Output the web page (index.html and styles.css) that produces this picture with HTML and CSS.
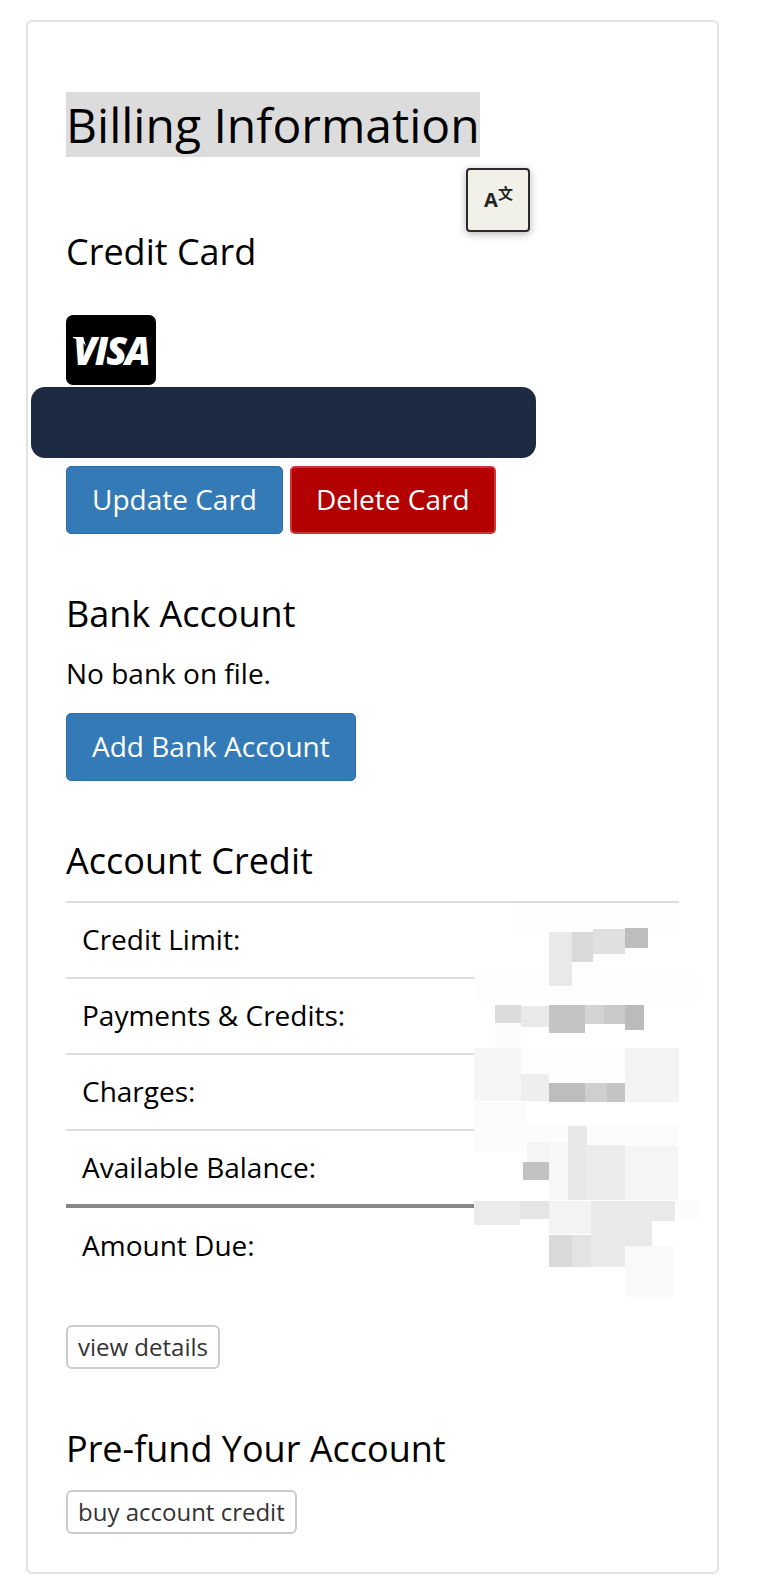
FILE: index.html
```html
<!DOCTYPE html>
<html lang="en">
<head>
<meta charset="utf-8">
<title>Billing Information</title>
<link rel="stylesheet" href="styles.css">
</head>
<body>
<main class="panel">
  <h1 class="title"><span class="selected">Billing Information</span></h1>
  <button class="translate" type="button" aria-label="Translate"><span class="tr-a">A</span><span class="tr-zh">文</span></button>

  <section class="credit-card">
    <h2 class="section-title">Credit Card</h2>
    <div class="visa"><svg class="visa-wedge" width="14" height="10" viewBox="0 0 14 10" aria-hidden="true"><path d="M0 0H10L13 9C10 5 5 2 0 1Z" fill="#fff"/></svg><span class="visa-text">VISA</span></div>
    <div class="redacted"></div>
    <div class="actions">
      <a class="btn btn-blue">Update Card</a>
      <a class="btn btn-red">Delete Card</a>
    </div>
  </section>

  <section class="bank">
    <h2 class="section-title">Bank Account</h2>
    <p class="note">No bank on file.</p>
    <a class="btn btn-blue">Add Bank Account</a>
  </section>

  <section class="account-credit">
    <h2 class="section-title">Account Credit</h2>
    <div class="table-wrap">
      <table class="ledger">
        <tr><td>Credit Limit:</td><td></td></tr>
        <tr><td>Payments &amp; Credits:</td><td></td></tr>
        <tr><td>Charges:</td><td></td></tr>
        <tr><td>Available Balance:</td><td></td></tr>
        <tr class="total"><td>Amount Due:</td><td></td></tr>
      </table>
      <svg class="pixels" width="226" height="402" viewBox="474 902 226 402" aria-hidden="true">
        <rect x="475" y="904" width="225" height="400" fill="#fff"/>
        <rect x="515" y="904" width="160" height="30" fill="#fefefe"/>
        <rect x="475" y="973" width="222" height="29" fill="#fdfdfd"/>
        <rect x="549" y="933" width="23" height="54" fill="#e9e9e9"/>
        <rect x="572" y="933" width="21" height="30" fill="#d9d9d9"/>
        <rect x="593" y="930" width="32" height="25" fill="#e0e0e0"/>
        <rect x="625" y="929" width="23" height="20" fill="#bdbdbd"/>
        <rect x="495" y="1024" width="26" height="25" fill="#fcfcfc"/>
        <rect x="495" y="1006" width="26" height="18" fill="#dcdcdc"/>
        <rect x="521" y="1007" width="28" height="21" fill="#e9e9e9"/>
        <rect x="549" y="1006" width="36" height="28" fill="#c4c4c4"/>
        <rect x="585" y="1006" width="19" height="19" fill="#d3d3d3"/>
        <rect x="604" y="1006" width="21" height="19" fill="#c9c9c9"/>
        <rect x="625" y="1006" width="19" height="25" fill="#bbbbbb"/>
        <rect x="474" y="1049" width="47" height="53" fill="#f6f6f6"/>
        <rect x="521" y="1049" width="104" height="26" fill="#fdfdfd"/>
        <rect x="521" y="1075" width="28" height="27" fill="#eeeeee"/>
        <rect x="549" y="1084" width="36" height="19" fill="#bdbdbd"/>
        <rect x="585" y="1084" width="22" height="19" fill="#cfcfcf"/>
        <rect x="607" y="1084" width="18" height="19" fill="#c4c4c4"/>
        <rect x="625" y="1049" width="54" height="54" fill="#f3f3f3"/>
        <rect x="474" y="1103" width="52" height="50" fill="#fcfcfc"/>
        <rect x="527" y="1124" width="151" height="23" fill="#fcfcfc"/>
        <rect x="527" y="1143" width="22" height="20" fill="#f5f5f5"/>
        <rect x="523" y="1163" width="26" height="18" fill="#c2c2c2"/>
        <rect x="549" y="1143" width="19" height="58" fill="#f7f7f7"/>
        <rect x="568" y="1127" width="19" height="74" fill="#e8e8e8"/>
        <rect x="587" y="1146" width="38" height="55" fill="#ebebeb"/>
        <rect x="625" y="1147" width="53" height="54" fill="#f5f5f5"/>
        <rect x="474" y="1202" width="46" height="24" fill="#ebebeb"/>
        <rect x="520" y="1202" width="29" height="18" fill="#e5e5e5"/>
        <rect x="549" y="1202" width="42" height="33" fill="#f3f3f3"/>
        <rect x="591" y="1202" width="61" height="45" fill="#e9e9e9"/>
        <rect x="652" y="1202" width="23" height="20" fill="#e9e9e9"/>
        <rect x="677" y="1202" width="21" height="20" fill="#fcfcfc"/>
        <rect x="549" y="1236" width="23" height="32" fill="#d9d9d9"/>
        <rect x="572" y="1236" width="19" height="32" fill="#e3e3e3"/>
        <rect x="591" y="1247" width="34" height="21" fill="#eaeaea"/>
        <rect x="625" y="1247" width="48" height="51" fill="#f9f9f9"/>
      </svg>
    </div>
    <a class="btn-small details">view details</a>
  </section>

  <section class="prefund">
    <h2 class="section-title">Pre-fund Your Account</h2>
    <a class="btn-small">buy account credit</a>
  </section>
</main>
</body>
</html>
```

FILE: styles.css
```css
* { box-sizing: border-box; }
html, body { margin: 0; background: #fff; }
body {
  padding: 20px 39px 22px 26px;
  font-family: "Open Sans", "Noto Sans", sans-serif;
  color: #000;
}
.panel {
  position: relative;
  border: 2px solid #e2e2e2;
  border-radius: 6px;
  background: #fff;
  height: 1554px;
  padding: 70px 38px 0;
}
.title {
  margin: 0;
  font-size: 48px;
  font-weight: 400;
  line-height: 65px;
}
.selected { background: #dcdcdc; }
.translate {
  position: absolute;
  left: 438px;
  top: 146px;
  width: 64px;
  height: 64px;
  padding: 0;
  border: 2px solid #2a2a2a;
  border-radius: 4px;
  background: #f1f1ea;
  box-shadow: 0 2px 8px rgba(0,0,0,.3);
  color: #20241f;
}
.tr-a { position: absolute; left: 16px; top: 17px; font: 700 20px/26px "Open Sans", sans-serif; }
.tr-zh { position: absolute; left: 30px; top: 13px; font: 700 15px/20px "Noto Sans CJK SC", sans-serif; }
.section-title {
  margin: 0;
  font-size: 36px;
  font-weight: 400;
  line-height: 48px;
}
.credit-card { margin-top: 71px; }
.visa {
  position: relative;
  width: 90px;
  height: 70px;
  margin-top: 39px;
  background: #000;
  border-radius: 7px;
  color: #fff;
  text-align: center;
}
.visa-wedge { position: absolute; left: 7px; top: 22px; }
.visa-text {
  font-family: "Open Sans", sans-serif;
  font-size: 38px;
  font-weight: 800;
  font-style: italic;
  line-height: 70px;
  letter-spacing: -2px;
}
.redacted {
  width: 505px;
  height: 71px;
  margin: 2px 0 0 -35px;
  background: #1c2b42;
  border-radius: 14px;
}
.actions { display: flex; gap: 7px; margin-top: 8px; }
.btn {
  display: inline-block;
  height: 68px;
  padding: 0 25px;
  border: 1px solid #2e6da4;
  border-radius: 5px;
  font-size: 28px;
  line-height: 65px;
  color: #fff;
}
.btn-blue { background: #337ab7; }
.btn-red { background: #b30000; border: 2px solid #d0353a; line-height: 63px; padding: 0 24px; }
.bank { margin-top: 56px; }
.note { margin: 17px 0 0; font-size: 28px; line-height: 37px; }
.bank .btn { margin-top: 21px; }
.account-credit { margin-top: 56px; }
.table-wrap { position: relative; margin-top: 16px; height: 408px; }
.ledger { width: 613px; border-collapse: collapse; font-size: 28px; }
.ledger td { height: 76px; padding: 0 16px 2px; border-top: 2px solid #ddd; }
.ledger .total td { height: 78px; border-top: 4px solid #888; }
.pixels { position: absolute; left: 408px; top: 0; }
.btn-small {
  display: inline-block;
  height: 44px;
  padding: 0 10px;
  border: 2px solid #ccc;
  border-radius: 6px;
  font-size: 24px;
  line-height: 40px;
  color: #333;
  background: #fff;
}
.details { margin-top: 16px; }
.prefund { margin-top: 56px; }
.prefund .btn-small { margin-top: 17px; }
```
